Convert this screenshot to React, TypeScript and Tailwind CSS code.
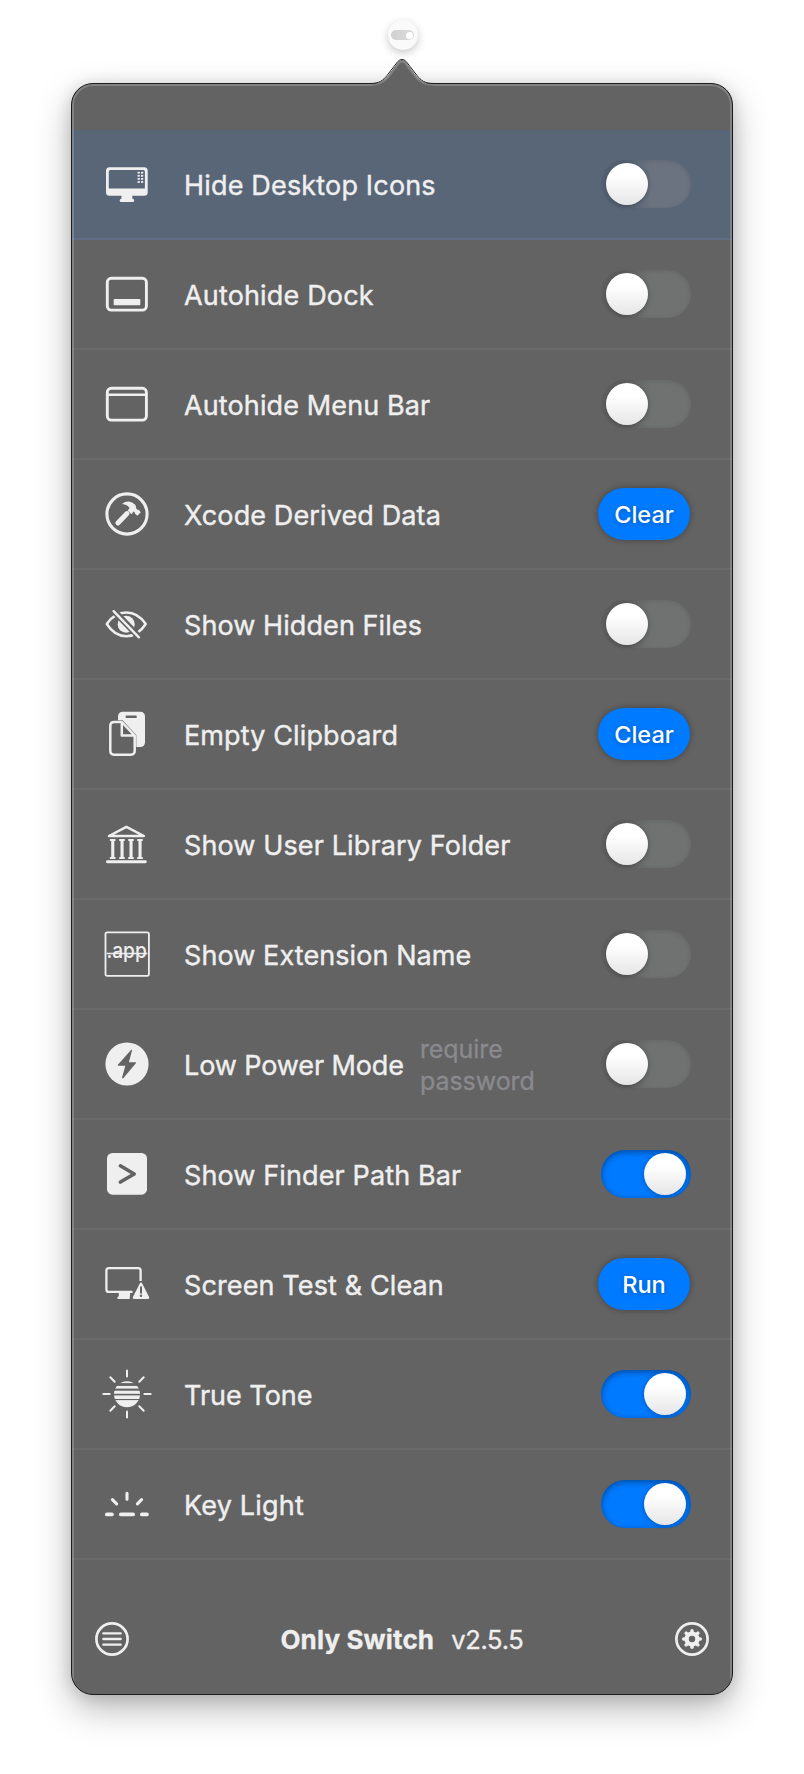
import React from "react";

const Icon = ({ children }: { children: React.ReactNode }) => (
  <svg viewBox="0 0 56 56" className="size-14 shrink-0 text-[#efefef]" fill="currentColor">
    {children}
  </svg>
);

const line = { fill: "none", stroke: "currentColor" } as const;
const BG = "#636363";

const DesktopIcon = () => (
  <Icon>
    <path
      fillRule="evenodd"
      d="M10.5 11.3H45.2Q48.7 11.3 48.7 14.8V36.2Q48.7 39.7 45.2 39.7H33.3V42.6Q35.2 43 35.2 44.5Q35.2 46 33.5 46H22.3Q20.6 46 20.6 44.5Q20.6 43 22.5 42.6V39.7H10.5Q7 39.7 7 36.2V14.8Q7 11.3 10.5 11.3ZM11.4 13.9Q9.8 13.9 9.8 15.5V32.5H45.9V15.5Q45.9 13.9 44.3 13.9Z"
    />
    {[16.7, 19.8, 22.9, 26].map((y) => (
      <g key={y}>
        <rect x="38.6" y={y - 0.9} width="2.2" height="1.8" />
        <rect x="42" y={y - 0.9} width="2.2" height="1.8" />
      </g>
    ))}
  </Icon>
);

const DockIcon = () => (
  <Icon>
    <rect x="8.3" y="12.3" width="39.1" height="31.8" rx="4" strokeWidth="2.9" {...line} />
    <rect x="14.7" y="33" width="26.6" height="6.2" rx="0.8" />
  </Icon>
);

const MenuBarIcon = () => (
  <Icon>
    <rect x="8.3" y="12.3" width="39.1" height="31.8" rx="4" strokeWidth="2.9" {...line} />
    <path d="M8.3 18.7H47.4" strokeWidth="2.5" {...line} />
  </Icon>
);

const HammerIcon = () => (
  <Icon>
    <circle cx="28" cy="28" r="20.1" strokeWidth="3.1" {...line} />
    <path d="M18.9 36.9L28 27.6" strokeWidth="5" strokeLinecap="round" {...line} />
    <path d="M23.1 17.9Q26 15.4 29.8 15.6Q33.5 15.9 36 18.6Q37.3 20.2 37.2 22.6Q38.6 24.4 39.7 23.8L41.8 26.3L38.3 29.8L35.8 27.6Q36 26 34.5 25.6L32.6 28.2L28.6 24.4L30.6 22.2Q28.5 18.4 23.1 17.9Z" />
  </Icon>
);

const EyeSlashIcon = () => (
  <Icon>
    <path
      d="M7.8 28C12.5 21 19.5 16.6 27.2 16.6S42 21 46.7 28C42 35.4 34.9 40.2 27.2 40.2S12.5 35.4 7.8 28Z"
      strokeWidth="2.5"
      strokeLinejoin="round"
      {...line}
    />
    <circle cx="27.2" cy="28.2" r="8.5" />
    <path d="M14 14L42 43" strokeWidth="6.2" fill="none" stroke={BG} />
    <path d="M14.6 15.2L39.9 41.4" strokeWidth="2.4" strokeLinecap="round" {...line} />
  </Icon>
);

const ClipboardIcon = () => (
  <Icon>
    <rect x="19" y="5.7" width="27" height="35.3" rx="4.6" />
    <rect x="26.6" y="9.6" width="11.2" height="2.5" rx="1.2" fill={BG} />
    <path
      d="M14.8 15.8H22.9L35.8 29.5V44.8Q35.8 48.8 31.8 48.8H15Q11.2 48.8 11.2 44.8V19.8Q11.2 15.8 14.8 15.8Z"
      fill={BG}
      stroke={BG}
      strokeWidth="3"
    />
    <path
      d="M22.8 16H15.2Q11.3 16 11.3 19.9V44.8Q11.3 48.7 15.2 48.7H31.8Q35.7 48.7 35.7 44.8V29.6L22.8 16V29.6H35.2"
      strokeWidth="2.5"
      strokeLinejoin="round"
      {...line}
    />
  </Icon>
);

const LibraryIcon = () => (
  <Icon>
    <path d="M10 20L27.4 10.8L44.9 20Z" strokeWidth="2.5" strokeLinejoin="round" {...line} />
    {[13.7, 23, 32, 41].map((x) => (
      <g key={x}>
        <rect x={x - 1.5} y="24" width="3.1" height="18" />
        <rect x={x - 3} y="23" width="6" height="1.9" rx="0.9" />
        <rect x={x - 3} y="41.1" width="6" height="1.9" rx="0.9" />
      </g>
    ))}
    <rect x="7" y="44.3" width="40.8" height="2.9" rx="1.4" />
  </Icon>
);

const ExtensionIcon = () => (
  <Icon>
    <rect x="6.5" y="6.3" width="43.4" height="43.5" rx="1.8" strokeWidth="1.8" {...line} />
    <text x="7.4" y="32.2" textLength="40.4" lengthAdjust="spacingAndGlyphs" className="font-['Inter'] text-[21px] font-medium">
      .app
    </text>
    <path d="M7.6 27.6H48.4" strokeWidth="1.5" {...line} />
  </Icon>
);

const PowerIcon = () => (
  <Icon>
    <circle cx="28" cy="28" r="21.6" />
    <path
      d="M32.2 13.8L18.9 28.7Q18.5 29.7 19.4 29.7H26.3L23 41.8Q23.3 43 24.3 42.2L36.9 27.3Q37.3 26.3 36.4 26.3H29.9L33 14.3Q33 13.2 32.2 13.8Z"
      fill={BG}
    />
  </Icon>
);

const PathBarIcon = () => (
  <Icon>
    <rect x="8" y="7" width="40" height="41.7" rx="5.5" />
    <path d="M21.4 19.8L35.2 28L21.4 36" strokeWidth="3.6" strokeLinecap="round" strokeLinejoin="round" fill="none" stroke={BG} />
  </Icon>
);

const ScreenWarningIcon = () => (
  <Icon>
    <path d="M41.6 25V14.6Q41.6 12.1 39.1 12.1H9.9Q7.4 12.1 7.4 14.6V33.4Q7.4 35.9 9.9 35.9H33.5" strokeWidth="2.3" {...line} />
    <path d="M19.8 36H31V39.5L30.6 43H19.6Q18.3 43 18.3 41.8Q18.3 40.6 19.8 40.5Z" />
    <path d="M40.8 27.4Q42 25.6 43.2 27.4L50.1 41Q50.8 43 49 43H35Q33.2 43 33.9 41Z" />
    <path d="M42 31.2V36.8" stroke={BG} strokeWidth="2" strokeLinecap="round" />
    <circle cx="42" cy="39.8" r="1.2" fill={BG} />
  </Icon>
);

const TrueToneIcon = () => (
  <Icon>
    <circle cx="28" cy="28.2" r="13" />
    <g fill={BG}>
      <rect x="14" y="17.1" width="28" height="2.8" />
      <rect x="14" y="22.6" width="28" height="2.1" />
      <rect x="14" y="27.8" width="28" height="1.6" />
      <rect x="14" y="33" width="28" height="1.1" />
    </g>
    <g strokeWidth="2" strokeLinecap="round" {...line}>
      {[0, 45, 90, 135, 180, 225, 270, 315].map((a) => (
        <path key={a} d="M28 4.4V10.6" transform={`rotate(${a} 28 28)`} />
      ))}
    </g>
  </Icon>
);

const KeyLightIcon = () => (
  <Icon>
    <rect x="6" y="36.4" width="8.8" height="3.9" rx="1.9" />
    <rect x="20" y="36.4" width="16" height="3.9" rx="1.9" />
    <rect x="41" y="36.4" width="8.8" height="3.9" rx="1.9" />
    <g strokeWidth="3.1" strokeLinecap="round" {...line}>
      <path d="M28 17.3V23.2M13.4 23.6L17.6 27.8M42.6 23.6L38.4 27.8" />
    </g>
  </Icon>
);

type Item = {
  label: string;
  icon: React.ComponentType;
  tracking?: string;
  on?: boolean;
  action?: string;
  note?: string;
};

const items: Item[] = [
  { label: "Hide Desktop Icons", icon: DesktopIcon, tracking: "tracking-[0.17px]" },
  { label: "Autohide Dock", icon: DockIcon, tracking: "tracking-[0.16px]" },
  { label: "Autohide Menu Bar", icon: MenuBarIcon },
  { label: "Xcode Derived Data", icon: HammerIcon, action: "Clear" },
  { label: "Show Hidden Files", icon: EyeSlashIcon, tracking: "tracking-[0.08px]" },
  { label: "Empty Clipboard", icon: ClipboardIcon, action: "Clear" },
  { label: "Show User Library Folder", icon: LibraryIcon },
  { label: "Show Extension Name", icon: ExtensionIcon, tracking: "tracking-[0.08px]" },
  { label: "Low Power Mode", icon: PowerIcon, note: "require password", tracking: "tracking-[-0.11px]" },
  { label: "Show Finder Path Bar", icon: PathBarIcon, on: true },
  { label: "Screen Test & Clean", icon: ScreenWarningIcon, action: "Run" },
  { label: "True Tone", icon: TrueToneIcon, on: true, tracking: "tracking-[0px]" },
  { label: "Key Light", icon: KeyLightIcon, on: true, tracking: "tracking-[0.19px]" },
];

function Toggle({ on, highlighted }: { on?: boolean; highlighted?: boolean }) {
  const track = on
    ? "justify-end bg-[#007aff] shadow-[inset_0_2px_6px_rgba(0,0,0,0.4)]"
    : highlighted
      ? "justify-start bg-linear-to-r from-transparent from-25% to-[#6b7280] to-55% shadow-[inset_0_1px_5px_rgba(0,0,0,0.1)]"
      : "justify-start bg-linear-to-r from-transparent from-25% to-[#6f7270] to-55% shadow-[inset_0_1px_5px_rgba(0,0,0,0.1)]";
  return (
    <button role="switch" aria-checked={!!on} className={`mr-[41px] flex h-12 w-[90px] shrink-0 items-center rounded-full px-[5px] ${track}`}>
      <span className="size-[42px] rounded-full bg-linear-to-b from-white from-30% to-[#e6e6e6] shadow-[0_1px_5px_rgba(0,0,0,0.3)]" />
    </button>
  );
}

function Row({ item, highlighted }: { item: Item; highlighted: boolean }) {
  const ItemIcon = item.icon;
  return (
    <li
      className={`flex h-[110px] items-center border-b-2 pl-[27px] ${
        highlighted ? "border-[#5f6d85] bg-[#586678]" : "border-[#6b6b6b]"
      }`}
    >
      <ItemIcon />
      <span
        className={`ml-[29px] pt-1 text-[27px] whitespace-nowrap text-[#efefef] [-webkit-text-stroke:0.4px_#efefef] ${
          item.tracking ?? "tracking-[0.12px]"
        }`}
      >
        {item.label}
      </span>
      {item.note && (
        <span className="ml-4 w-32 pt-0.5 text-[25px] leading-8 tracking-[-0.05px] text-[#8a8a8e] [-webkit-text-stroke:0.3px_#8a8a8e]">
          {item.note}
        </span>
      )}
      <span className="flex-1" />
      {item.action ? (
        <button className="mr-[42px] h-[52px] w-[92px] shrink-0 rounded-[26px] bg-[#007aff] pt-0.5 text-[23.5px] font-medium text-white shadow-[0_0_6px_rgba(0,0,0,0.35)] [text-shadow:0_1px_4px_rgba(0,0,0,0.25)]">
          {item.action}
        </button>
      ) : (
        <Toggle on={item.on} highlighted={highlighted} />
      )}
    </li>
  );
}

export default function App() {
  return (
    <main className="flex h-[1774px] w-[804px] flex-col items-center overflow-hidden bg-white pt-5 font-['Inter',sans-serif]">
      <div className="z-10 ml-px flex size-[30px] shrink-0 items-center justify-center rounded-full bg-[#fafafa] shadow-[0_3px_8px_rgba(0,0,0,0.22)]">
        <div className="flex h-[10px] w-[23px] items-center justify-end rounded-full bg-linear-to-r from-[#d0d0d0] to-[#dcdcdc] pr-[1.5px]">
          <span className="size-[7px] rounded-full bg-white" />
        </div>
      </div>
      <svg viewBox="0 0 64 28" className="z-10 mt-2 -mb-[3px] h-7 w-16 shrink-0">
        <path d="M0 28V26C10 26 13.5 23 17.5 18.5L28 4.6Q32 -0.6 36 4.6L46.5 18.5C50.5 23 54 26 64 26V28Z" fill={BG} />
        <path d="M0 27C10 27 14.5 24 18.5 19L28.6 5.4Q32 1.4 35.4 5.4L45.5 19C49.5 24 54 27 64 27" fill="none" stroke="#808080" strokeWidth="2" />
        <path d="M0 25.5C9.5 25.5 13 22.5 17 17.5L27.8 3.5Q32 -0.6 36.2 3.5L47 17.5C51 22.5 54.5 25.5 64 25.5" fill="none" stroke="#222" strokeWidth="1" />
      </svg>
      <section className="flex h-[1612px] w-[662px] shrink-0 flex-col overflow-hidden rounded-[22px] border border-[#1c1c1c] bg-[#636363] shadow-[0_14px_36px_rgba(0,0,0,0.28),0_2px_16px_rgba(0,0,0,0.14)]">
        <div className="relative flex flex-1 flex-col pt-[46px]">
          <ul>
            {items.map((item, i) => (
              <Row key={item.label} item={item} highlighted={i === 0} />
            ))}
          </ul>
          <footer className="flex h-[158px] items-start justify-between px-[23px] pt-[62px] text-[#efefef]">
            <svg viewBox="-17 -17 34 34" className="size-[34px]" fill="none" stroke="currentColor">
              <circle r="15.6" strokeWidth="2.7" />
              <path d="M-8.7 -5.6H8.7M-8.7 0H8.7M-8.7 5.7H8.7" strokeWidth="2.3" strokeLinecap="round" />
            </svg>
            <div className="flex items-baseline gap-[17px] pt-px text-[26px] leading-[34px]">
              <span className="font-bold tracking-[0.13px] [-webkit-text-stroke:0.3px_#efefef]">Only Switch</span>
              <span className="text-[25.5px] tracking-[-0.3px] [-webkit-text-stroke:0.35px_#efefef]">v2.5.5</span>
            </div>
            <svg viewBox="-17 -17 34 34" className="size-[34px]">
              <circle r="15.6" strokeWidth="2.7" fill="none" stroke="currentColor" />
              <circle r="5.4" strokeWidth="4.4" fill="none" stroke="currentColor" />
              <g stroke="currentColor" strokeWidth="3.5" strokeLinecap="round">
                {[0, 45, 90, 135, 180, 225, 270, 315].map((a) => (
                  <path key={a} d="M0 -6.4V-8.3" transform={`rotate(${a})`} />
                ))}
              </g>
            </svg>
          </footer>
          <div className="pointer-events-none absolute inset-0 rounded-[21px] border-2 border-white/20" />
        </div>
      </section>
    </main>
  );
}
